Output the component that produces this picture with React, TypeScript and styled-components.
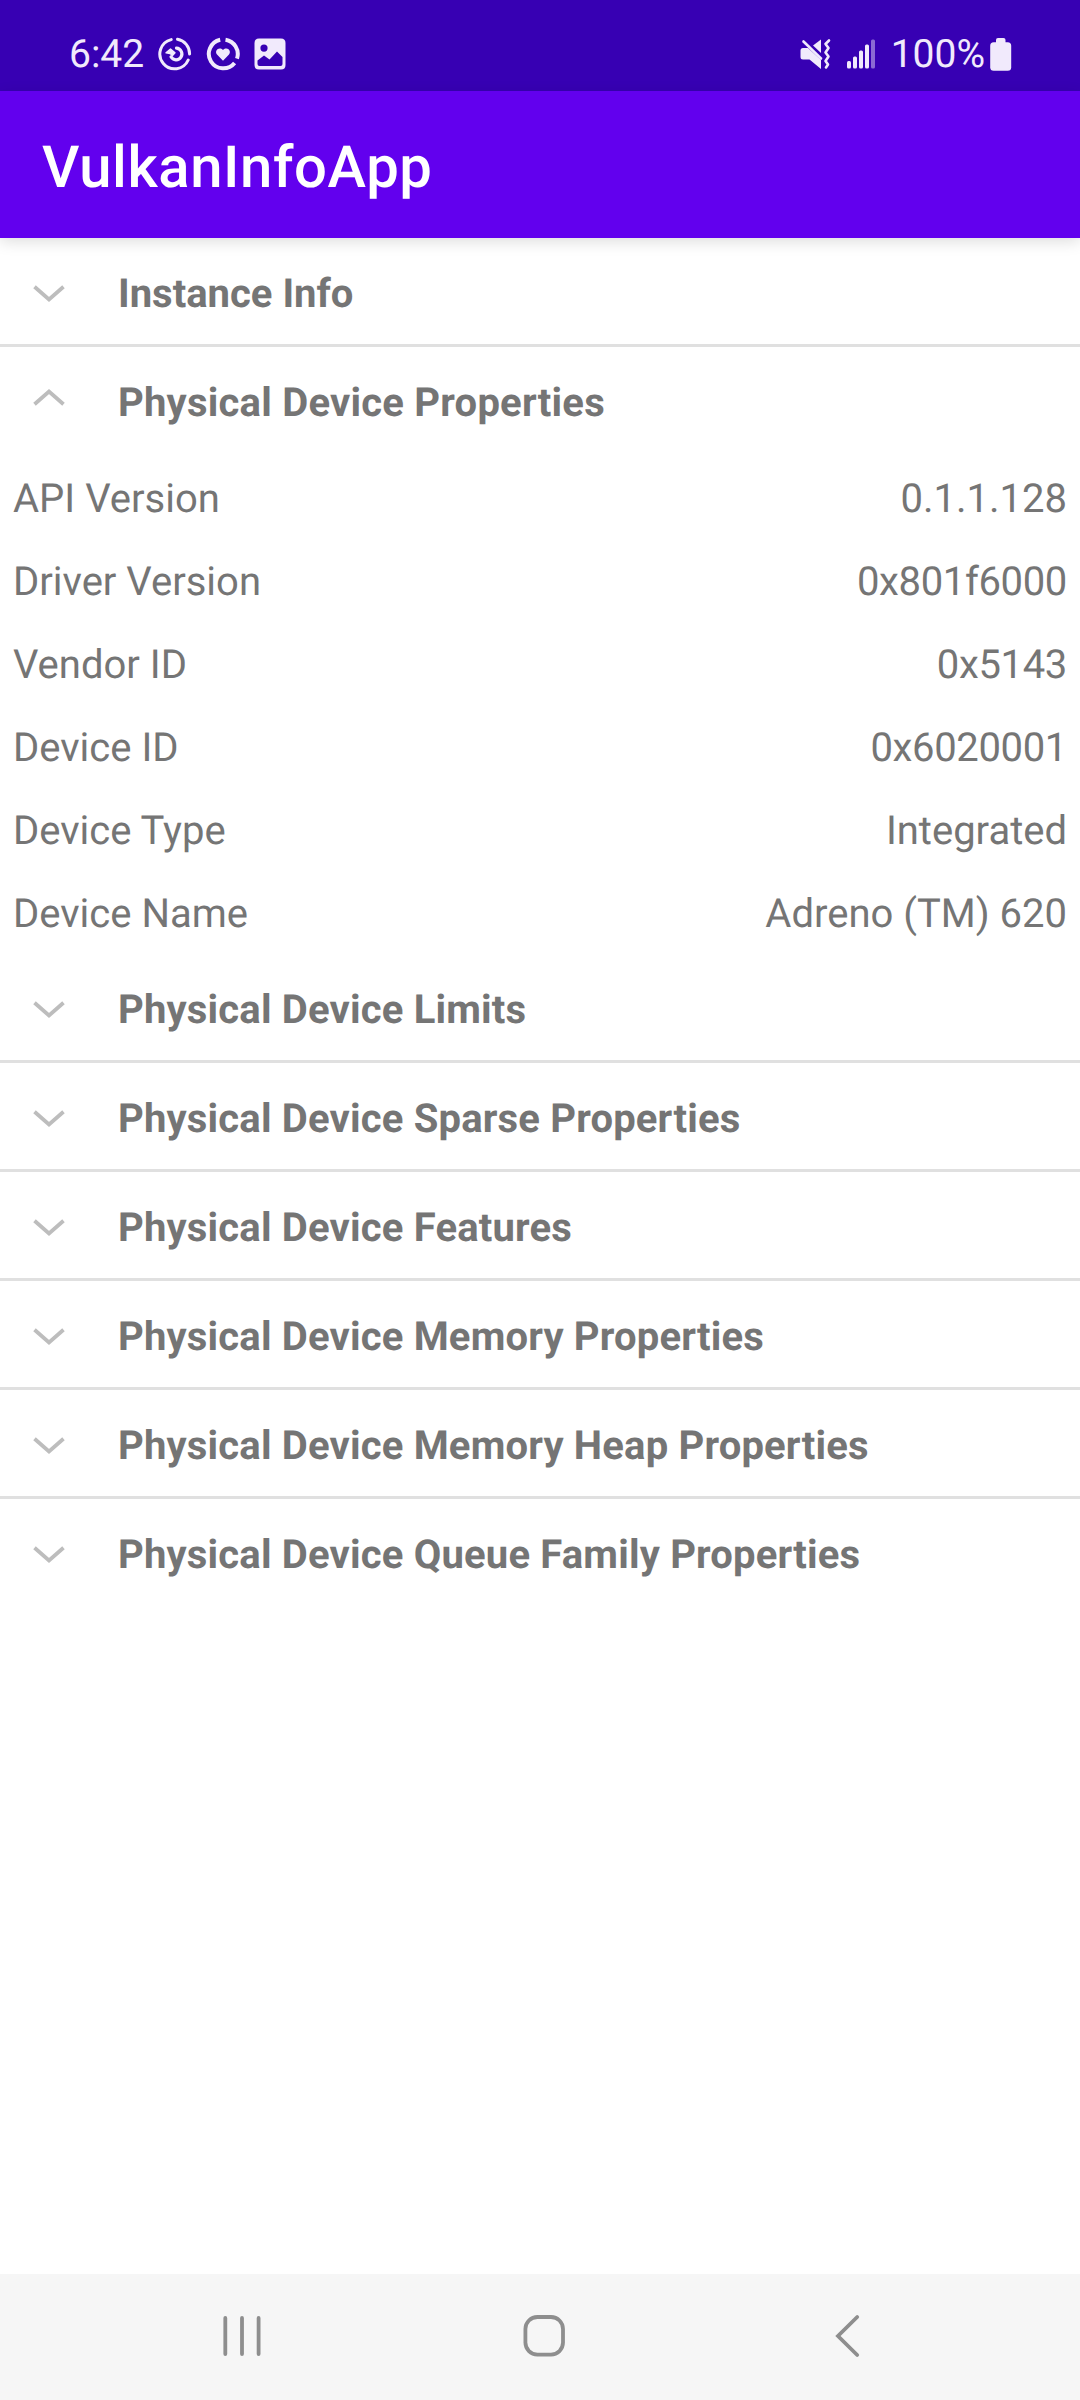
import React, { useState } from "react";
import styled, { createGlobalStyle } from "styled-components";

const GlobalStyle = createGlobalStyle`
  *, *::before, *::after { box-sizing: border-box; }
  body { margin: 0; background: #fff; }
`;

const Screen = styled.div`
  display: flex;
  flex-direction: column;
  width: 1080px;
  height: 2400px;
  background: #ffffff;
  font-family: Roboto, "Noto Sans", sans-serif;
  text-rendering: geometricPrecision;
  color: #757575;
`;

const StatusBar = styled.header`
  display: flex;
  align-items: center;
  justify-content: space-between;
  height: 91px;
  padding: 17px 68px 0 69px;
  background: #3700b3;
  color: #f1eafc;
`;

const StatusGroup = styled.div<{ $gap: number }>`
  display: flex;
  align-items: center;
  gap: ${(p) => p.$gap}px;
`;

const StatusText = styled.span`
  font-size: 39px;
  line-height: 46px;
`;

const StatusIcon = styled.svg`
  display: block;
  flex: none;
`;

const AppBar = styled.div`
  display: flex;
  align-items: center;
  flex: none;
  height: 147px;
  padding: 6px 42px 0;
  background: #6200ee;
  box-shadow: 0 4px 14px rgba(0, 0, 0, 0.13);
`;

const Title = styled.h1`
  margin: 0;
  font-size: 58px;
  line-height: 68px;
  font-weight: 500;
  letter-spacing: 0.6px;
  color: #ffffff;
`;

const List = styled.main`
  flex: 1;
  display: flex;
  flex-direction: column;
`;

const Section = styled.section<{ $divided: boolean }>`
  border-bottom: ${(p) => (p.$divided ? "3px solid #e0e0e0" : "none")};
`;

const SectionHeader = styled.button`
  display: flex;
  align-items: flex-start;
  width: 100%;
  height: 106px;
  padding: 0 0 0 33px;
  border: 0;
  background: transparent;
  font: inherit;
  text-rendering: inherit;
  color: inherit;
  text-align: left;
`;

const Chevron = styled.svg<{ $open: boolean }>`
  flex: none;
  display: block;
  margin-top: ${(p) => (p.$open ? 42 : 47)}px;
`;

const SectionTitle = styled.span<{ $tracking: number }>`
  margin: 32px 0 0 53px;
  font-size: 40px;
  line-height: 48px;
  font-weight: 700;
  letter-spacing: ${(p) => p.$tracking}px;
  white-space: nowrap;
`;

const Properties = styled.dl`
  margin: 0;
  padding: 3px 13px 0;
`;

const Property = styled.div`
  display: flex;
  align-items: center;
  justify-content: space-between;
  height: 83px;
  padding-top: 2px;
  font-size: 40px;
  line-height: 48px;
`;

const Name = styled.dt`
  margin: 0;
`;

const Value = styled.dd<{ $hex: boolean }>`
  margin: 0;
  letter-spacing: ${(p) => (p.$hex ? "-0.35px" : "normal")};
`;

const NavBar = styled.nav`
  display: flex;
  align-items: center;
  flex: none;
  height: 126px;
  padding: 0 220px 2px;
  justify-content: space-between;
  background: #f6f6f6;
`;

const NavIcon = styled.svg`
  display: block;
  fill: none;
  stroke: #8e8e8e;
`;

const HomeIcon = styled(NavIcon)`
  margin-left: 8px;
`;

type SectionData = { title: string; tracking?: number; rows: [string, string][] };

const sections: SectionData[] = [
  { title: "Instance Info", tracking: 0, rows: [] },
  {
    title: "Physical Device Properties",
    tracking: 0.22,
    rows: [
      ["API Version", "0.1.1.128"],
      ["Driver Version", "0x801f6000"],
      ["Vendor ID", "0x5143"],
      ["Device ID", "0x6020001"],
      ["Device Type", "Integrated"],
      ["Device Name", "Adreno (TM) 620"],
    ],
  },
  { title: "Physical Device Limits", rows: [] },
  { title: "Physical Device Sparse Properties", rows: [] },
  { title: "Physical Device Features", rows: [] },
  { title: "Physical Device Memory Properties", rows: [] },
  { title: "Physical Device Memory Heap Properties", rows: [] },
  { title: "Physical Device Queue Family Properties", rows: [] },
];

function SyncIcon() {
  return (
    <StatusIcon width="34" height="34" viewBox="0 0 34 34" fill="none" stroke="currentColor">
      <path d="M13.2 2.6A14.8 14.8 0 1 0 30.2 23" strokeWidth="3" strokeLinecap="round" />
      <path d="M19.5 2.2A14.8 14.8 0 0 1 31.6 17" strokeWidth="3" strokeLinecap="round" />
      <path d="M18.5 11.2A5.8 5.8 0 1 1 13 19.8" strokeWidth="3.2" strokeLinecap="round" />
      <path d="M8 15.8L12.5 12L17 15.8L14.5 18.5L12 16.5Z" fill="currentColor" strokeWidth="1.4" strokeLinejoin="round" />
    </StatusIcon>
  );
}

function HeartIcon() {
  return (
    <StatusIcon width="34" height="34" viewBox="0 0 34 34" fill="none" stroke="currentColor">
      <path d="M14.2 2.7A14.5 14.5 0 1 0 28.6 26" strokeWidth="4" />
      <path d="M19.5 2.7A14.5 14.5 0 0 1 31 21.6" strokeWidth="4" />
      <path
        d="M17 23.8L11 17.6C8 13.6 13 9 17 13C21 9 26 13.6 23 17.6Z"
        fill="currentColor"
        stroke="none"
      />
    </StatusIcon>
  );
}

function PictureIcon() {
  return (
    <StatusIcon width="32" height="32" viewBox="0 0 32 32">
      <path
        fill="currentColor"
        fillRule="evenodd"
        d="M5 0.5H27Q31.5 0.5 31.5 5V27Q31.5 31.5 27 31.5H5Q0.5 31.5 0.5 27V5Q0.5 0.5 5 0.5ZM10 6.5A3.6 3.6 0 1 0 10 13.7A3.6 3.6 0 1 0 10 6.5ZM3.5 22.5V26Q3.5 28 5.5 28H26.5Q28.5 28 28.5 26V19L23 13.5L15.5 21.5L10 17.5Z"
      />
    </StatusIcon>
  );
}

function MutedIcon() {
  return (
    <StatusIcon width="31" height="32" viewBox="0 0 31 32" fill="currentColor">
      <path d="M3 10H8L21 22V31L9.5 21.5H3Q0.5 21.5 0.5 19V12.5Q0.5 10 3 10Z" />
      <path d="M21 1.5V15L13 7.5Z" />
      <path d="M3.5 3.5L21 20.5" stroke="currentColor" strokeWidth="2.6" strokeLinecap="round" />
      <path
        d="M29 2.5L25.5 6L28.5 10L25.5 14.5L28.5 18.5L25.5 23L28 26.5L26 29.5"
        fill="none"
        stroke="currentColor"
        strokeWidth="2.6"
        strokeLinecap="round"
        strokeLinejoin="round"
      />
    </StatusIcon>
  );
}

function SignalIcon() {
  return (
    <StatusIcon width="28" height="30" viewBox="0 0 28 30" fill="currentColor">
      <rect x="0" y="22" width="4" height="7.5" rx="1.5" />
      <rect x="6" y="17.5" width="4" height="12" rx="1.5" />
      <rect x="12" y="11.5" width="4" height="18" rx="1.5" />
      <rect x="18" y="5.5" width="4" height="24" rx="1.5" />
      <rect x="24" y="0.5" width="4" height="29" rx="1.5" opacity="0.45" />
    </StatusIcon>
  );
}

function BatteryIcon() {
  return (
    <StatusIcon width="22" height="33" viewBox="0 0 22 33" fill="currentColor">
      <rect x="6" y="0" width="9.5" height="8" rx="2" />
      <rect x="0.2" y="4.3" width="21" height="28.4" rx="3.5" />
    </StatusIcon>
  );
}

export default function App() {
  const [open, setOpen] = useState("Physical Device Properties");

  return (
    <>
      <GlobalStyle />
      <Screen>
        <StatusBar>
          <StatusGroup $gap={14}>
            <StatusText>6:42</StatusText>
            <SyncIcon />
            <HeartIcon />
            <PictureIcon />
          </StatusGroup>
          <StatusGroup $gap={16}>
            <MutedIcon />
            <SignalIcon />
            <StatusGroup $gap={5}>
              <StatusText>100%</StatusText>
              <BatteryIcon />
            </StatusGroup>
          </StatusGroup>
        </StatusBar>
        <AppBar>
          <Title>VulkanInfoApp</Title>
        </AppBar>
        <List>
          {sections.map((section, i) => {
            const isOpen = open === section.title;
            return (
              <Section key={section.title} $divided={!isOpen && i < sections.length - 1}>
                <SectionHeader onClick={() => setOpen(isOpen ? "" : section.title)}>
                  <Chevron $open={isOpen} width="32" height="17" viewBox="0 0 32 17">
                    <path
                      d={isOpen ? "M1.5 15.2L16 2.6L30.5 15.2" : "M1.5 1.8L16 14.4L30.5 1.8"}
                      fill="none"
                      stroke="#bdbdbd"
                      strokeWidth="3.8"
                    />
                  </Chevron>
                  <SectionTitle $tracking={section.tracking ?? 0.18}>{section.title}</SectionTitle>
                </SectionHeader>
                {isOpen && (
                  <Properties>
                    {section.rows.map(([name, value]) => (
                      <Property key={name}>
                        <Name>{name}</Name>
                        <Value $hex={value.startsWith("0x")}>{value}</Value>
                      </Property>
                    ))}
                  </Properties>
                )}
              </Section>
            );
          })}
        </List>
        <NavBar>
          <NavIcon width="44" height="44" viewBox="0 0 44 44" strokeWidth="3.8" strokeLinecap="round">
            <path d="M5.3 4V40M22 4V40M38.6 4V40" />
          </NavIcon>
          <HomeIcon width="44" height="44" viewBox="0 0 44 44" strokeWidth="3.8">
            <rect x="3.4" y="3" width="37.6" height="37.6" rx="12" />
          </HomeIcon>
          <NavIcon width="44" height="44" viewBox="0 0 44 44" strokeWidth="3.8" strokeLinecap="round">
            <path d="M41.2 3L22 22L41.2 41" />
          </NavIcon>
        </NavBar>
      </Screen>
    </>
  );
}
